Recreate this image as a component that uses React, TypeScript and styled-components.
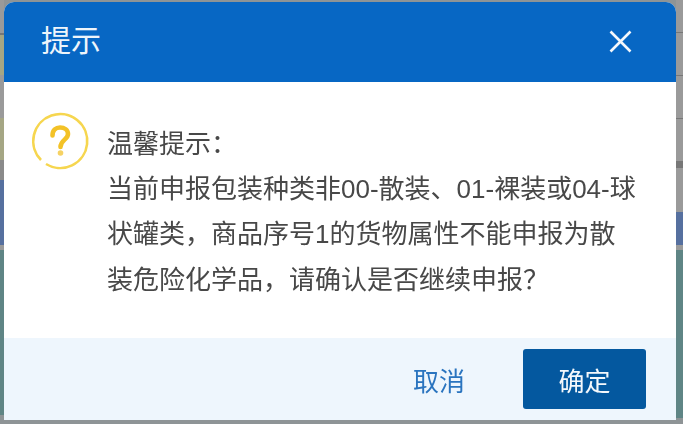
import React from "react";
import styled, { createGlobalStyle } from "styled-components";

const Global = createGlobalStyle`
  html, body { margin: 0; padding: 0; background: #8e9496; }
  #root { width: 683px; height: 424px; overflow: hidden; }
`;

const Backdrop = styled.div`
  width: 683px;
  height: 424px;
  box-sizing: border-box;
  padding: 2px 7px 4px 4px;
  font-family: "Liberation Sans", "Noto Sans CJK SC", sans-serif;
  background:
    linear-gradient(
        to bottom,
        #9a9a9a 0 33px,
        #777 33px 35px,
        #a5a684 35px 75px,
        #9a9a9a 75px 118px,
        #a5a684 118px 160px,
        #8a8a8a 160px 180px,
        #56709f 180px 245px,
        #9a9a9a 245px 250px,
        #5f8585 250px 415px,
        #8e9496 415px
      )
      left top / 4px 100% no-repeat,
    linear-gradient(
        to bottom,
        #9a9a9a 0 32px,
        #777 32px 33px,
        #9a9a9a 33px 75px,
        #777 75px 76px,
        #9a9a9a 76px 118px,
        #777 118px 119px,
        #9a9a9a 119px 161px,
        #777 161px 168px,
        #9a9a9a 168px 212px,
        #56709f 212px 245px,
        #9a9a9a 245px 250px,
        #5f8585 250px 418px,
        #8e9496 418px
      )
      right top / 7px 100% no-repeat,
    #8e9496;
`;

const Dialog = styled.div`
  height: 100%;
  display: flex;
  flex-direction: column;
  border-radius: 10px 10px 0 0;
  overflow: hidden;
  background: #fff;
  filter: blur(0.35px);
`;

const Header = styled.div`
  height: 80px;
  box-sizing: border-box;
  flex: none;
  display: flex;
  align-items: center;
  justify-content: space-between;
  padding: 0 44px 2px 37px;
  background: #0767c4;
  color: #eef5fb;
`;

const Title = styled.h1`
  margin: 0;
  font-size: 30px;
  font-weight: 400;
  line-height: 78px;
`;

const Close = styled.button`
  width: 23px;
  height: 23px;
  padding: 0;
  border: 0;
  background: none;
  display: flex;
  color: #f4f8fc;
`;

const Body = styled.div`
  flex: 1;
  display: flex;
  gap: 17px;
  padding: 29px 0 0 26px;
`;

const Message = styled.div`
  width: 532px;
  padding-top: 11px;
  font-size: 26px;
  line-height: 45.2px;
  color: #484848;
`;

const Footer = styled.div`
  height: 82px;
  flex: none;
  display: flex;
  align-items: center;
  justify-content: flex-end;
  gap: 58px;
  padding: 0 30px 0 0;
  background: #eef6fd;
`;

const TextButton = styled.button`
  padding: 0;
  border: 0;
  background: none;
  font: inherit;
  font-size: 26px;
  color: #2a74bf;
`;

const PrimaryButton = styled.button`
  width: 123px;
  height: 60px;
  border: 0;
  border-radius: 3px;
  background: #04589f;
  color: #f4f8fc;
  font: inherit;
  font-size: 26px;
`;

const QuestionIcon = () => (
  <svg width="60" height="60" viewBox="0 0 60 60" fill="none" style={{ flex: "none" }}>
    <path d="M16 53A27 27 0 1 0 11 49" stroke="#f6d64f" strokeWidth="2.6" />
    <path
      d="M22.5 24.5C22.5 19 26 16.5 30 16.5C34.5 16.5 38 19 38 23C38 28.5 30.5 29 30.5 36"
      stroke="#f3c227"
      strokeWidth="4.6"
      strokeLinecap="round"
    />
    <circle cx="30.5" cy="42" r="2.8" fill="#f6d263" />
  </svg>
);

export default function App() {
  return (
    <Backdrop>
      <Global />
      <Dialog>
        <Header>
          <Title>提示</Title>
          <Close aria-label="关闭">
            <svg width="23" height="23" viewBox="0 0 23 23" fill="none">
              <path d="M1.5 1.5l20 20M21.5 1.5l-20 20" stroke="currentColor" strokeWidth="2.6" />
            </svg>
          </Close>
        </Header>
        <Body>
          <QuestionIcon />
          <Message>
            温馨提示：
            <br />
            当前申报包装种类非00-散装、01-裸装或04-球状罐类，商品序号1的货物属性不能申报为散装危险化学品，请确认是否继续申报？
          </Message>
        </Body>
        <Footer>
          <TextButton>取消</TextButton>
          <PrimaryButton>确定</PrimaryButton>
        </Footer>
      </Dialog>
    </Backdrop>
  );
}
